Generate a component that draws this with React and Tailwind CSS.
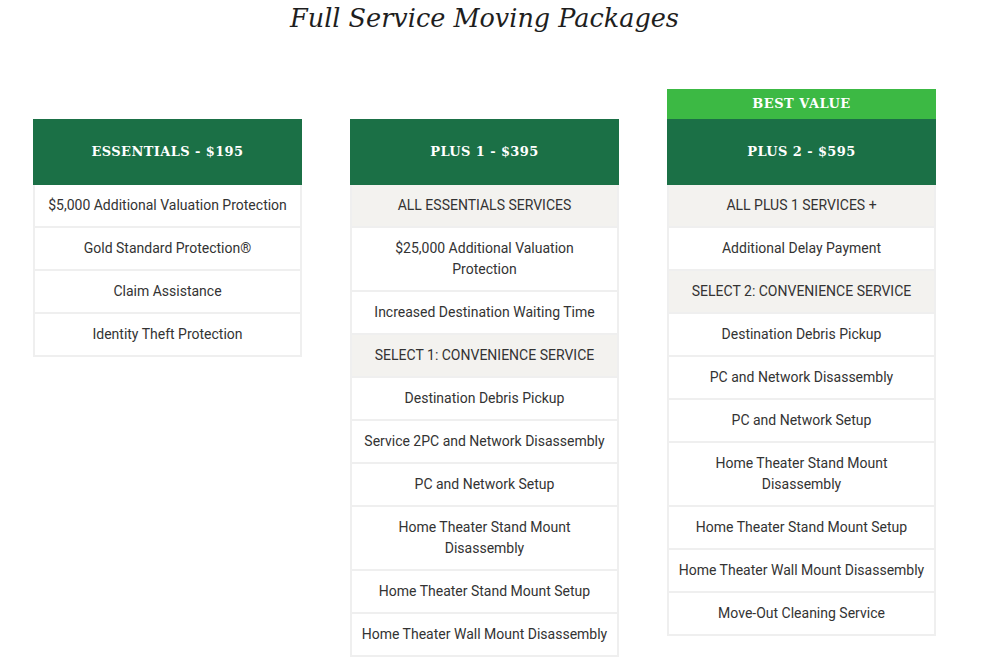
import React from 'react';

const columns = [
  {
    title: 'ESSENTIALS - $195',
    rows: [
      { text: '$5,000 Additional Valuation Protection' },
      { text: 'Gold Standard Protection®' },
      { text: 'Claim Assistance' },
      { text: 'Identity Theft Protection' },
    ],
  },
  {
    title: 'PLUS 1 - $395',
    rows: [
      { text: 'ALL ESSENTIALS SERVICES', shaded: true },
      { text: '$25,000 Additional Valuation Protection', narrow: true },
      { text: 'Increased Destination Waiting Time' },
      { text: 'SELECT 1: CONVENIENCE SERVICE', shaded: true },
      { text: 'Destination Debris Pickup' },
      { text: 'Service 2PC and Network Disassembly' },
      { text: 'PC and Network Setup' },
      { text: 'Home Theater Stand Mount Disassembly' },
      { text: 'Home Theater Stand Mount Setup' },
      { text: 'Home Theater Wall Mount Disassembly' },
    ],
  },
  {
    title: 'PLUS 2 - $595',
    badge: 'BEST VALUE',
    rows: [
      { text: 'ALL PLUS 1 SERVICES +', shaded: true },
      { text: 'Additional Delay Payment' },
      { text: 'SELECT 2: CONVENIENCE SERVICE', shaded: true },
      { text: 'Destination Debris Pickup' },
      { text: 'PC and Network Disassembly' },
      { text: 'PC and Network Setup' },
      { text: 'Home Theater Stand Mount Disassembly' },
      { text: 'Home Theater Stand Mount Setup' },
      { text: 'Home Theater Wall Mount Disassembly' },
      { text: 'Move-Out Cleaning Service' },
    ],
  },
];

const slab = { fontFamily: '"DejaVu Serif", serif' };

const PackageCard = ({ pkg }) => (
  <div className={`w-[269px] shrink-0 ${pkg.badge ? '' : 'mt-[30px]'}`}>
    {pkg.badge && (
      <div
        className="h-[30px] bg-[#3cb944] text-white text-[13px] font-bold tracking-[0.5px] flex items-center justify-center"
        style={slab}
      >
        {pkg.badge}
      </div>
    )}
    <div
      className="h-[66px] bg-[#1b7046] text-white text-[13px] font-bold tracking-[0.4px] flex items-center justify-center"
      style={slab}
    >
      {pkg.title}
    </div>
    <div className="border-x-2 border-b-2 border-[#efefef]">
      {pkg.rows.map((row, i) => (
        <div
          key={i}
          className={`${row.narrow ? 'px-6' : 'px-2'} py-[10px] text-center text-[14px] leading-[21px] text-[#333] ${
            i > 0 ? 'border-t-2 border-[#efefef]' : ''
          } ${row.shaded ? 'bg-[#f3f2ef]' : 'bg-white'}`}
        >
          {row.text}
        </div>
      ))}
    </div>
  </div>
);

export default function App() {
  return (
    <div
      className="w-[996px] h-[670px] bg-white overflow-hidden"
      style={{ fontFamily: 'Roboto, "Liberation Sans", sans-serif' }}
    >
      <div className="w-[903px] ml-[33px]">
        <h1
          className="text-center italic text-[25.5px] leading-[36px] text-[#1e1e1e]"
          style={slab}
        >
          Full Service Moving Packages
        </h1>
        <div className="mt-[53px] flex items-start gap-[48px]">
          {columns.map((pkg) => (
            <PackageCard key={pkg.title} pkg={pkg} />
          ))}
        </div>
      </div>
    </div>
  );
}
